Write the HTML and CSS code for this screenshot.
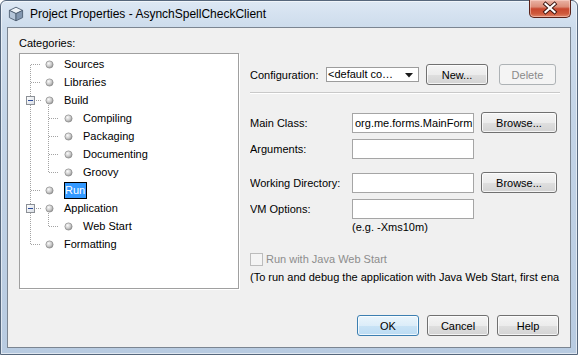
FILE: index.html
```html
<!DOCTYPE html>
<html>
<head>
<meta charset="utf-8">
<title>Project Properties</title>
<link rel="stylesheet" href="styles.css">
</head>
<body>
<svg class="defs" width="0" height="0" aria-hidden="true">
  <defs>
    <radialGradient id="ball" cx="38%" cy="35%" r="70%">
      <stop offset="0" stop-color="#fbfbfb"/>
      <stop offset="0.55" stop-color="#cdcdcd"/>
      <stop offset="1" stop-color="#8f8f8f"/>
    </radialGradient>
    <linearGradient id="boxfill" x1="0" y1="0" x2="1" y2="1">
      <stop offset="0" stop-color="#ffffff"/>
      <stop offset="1" stop-color="#d8dde4"/>
    </linearGradient>
  </defs>
</svg>
<div class="window">
  <div class="titlebar">
    <svg class="appicon" viewBox="0 0 16 16" width="16" height="16">
      <path d="M8 1.2 L14.6 4.4 L8 7.6 L1.4 4.4 Z" fill="#eef3f8" stroke="#4d5d72" stroke-width="0.9" stroke-linejoin="round"/>
      <path d="M1.4 4.4 L8 7.6 L8 14.8 L1.4 11.6 Z" fill="#b4c5d9" stroke="#4d5d72" stroke-width="0.9" stroke-linejoin="round"/>
      <path d="M8 7.6 L14.6 4.4 L14.6 11.6 L8 14.8 Z" fill="#8397b0" stroke="#4d5d72" stroke-width="0.9" stroke-linejoin="round"/>
    </svg>
    <span class="title">Project Properties - AsynchSpellCheckClient</span>
    <div class="close">
      <svg viewBox="0 0 42 18" width="42" height="18">
        <path d="M16.5 5 L25.5 13 M25.5 5 L16.5 13" stroke="#3b1510" stroke-width="4" stroke-linecap="square"/>
        <path d="M16.5 5 L25.5 13 M25.5 5 L16.5 13" stroke="#ffffff" stroke-width="2.2" stroke-linecap="square"/>
      </svg>
    </div>
  </div>
  <div class="client">
    <div class="main">
      <div class="left">
        <div class="cat-label">Categories:</div>
        <div class="tree">
          <div class="row">
            <svg width="44" height="18"><path class="dl" d="M10.5 10V18 M11 9.5H21"/><circle cx="29.5" cy="9.5" r="3.6" fill="url(#ball)" stroke="#8a8a8a" stroke-width="0.7"/></svg>
            <span class="lbl">Sources</span>
          </div>
          <div class="row">
            <svg width="44" height="18"><path class="dl" d="M10.5 0V18 M11 9.5H21"/><circle cx="29.5" cy="9.5" r="3.6" fill="url(#ball)" stroke="#8a8a8a" stroke-width="0.7"/></svg>
            <span class="lbl">Libraries</span>
          </div>
          <div class="row">
            <svg width="44" height="18"><path class="dl" d="M10.5 0V5 M10.5 14V18 M16 9.5H21 M28.5 14V18"/><rect x="6.5" y="5.5" width="8" height="8" fill="url(#boxfill)" stroke="#8c9096"/><rect x="8" y="9" width="5" height="1" fill="#2b4a9a"/><circle cx="29.5" cy="9.5" r="3.6" fill="url(#ball)" stroke="#8a8a8a" stroke-width="0.7"/></svg>
            <span class="lbl">Build</span>
          </div>
          <div class="row">
            <svg width="63" height="18"><path class="dl" d="M10.5 0V18 M28.5 0V18 M29 9.5H39"/><circle cx="48.5" cy="9.5" r="3.6" fill="url(#ball)" stroke="#8a8a8a" stroke-width="0.7"/></svg>
            <span class="lbl">Compiling</span>
          </div>
          <div class="row">
            <svg width="63" height="18"><path class="dl" d="M10.5 0V18 M28.5 0V18 M29 9.5H39"/><circle cx="48.5" cy="9.5" r="3.6" fill="url(#ball)" stroke="#8a8a8a" stroke-width="0.7"/></svg>
            <span class="lbl">Packaging</span>
          </div>
          <div class="row">
            <svg width="63" height="18"><path class="dl" d="M10.5 0V18 M28.5 0V18 M29 9.5H39"/><circle cx="48.5" cy="9.5" r="3.6" fill="url(#ball)" stroke="#8a8a8a" stroke-width="0.7"/></svg>
            <span class="lbl">Documenting</span>
          </div>
          <div class="row">
            <svg width="63" height="18"><path class="dl" d="M10.5 0V18 M28.5 0V10 M29 9.5H39"/><circle cx="48.5" cy="9.5" r="3.6" fill="url(#ball)" stroke="#8a8a8a" stroke-width="0.7"/></svg>
            <span class="lbl">Groovy</span>
          </div>
          <div class="row">
            <svg width="44" height="18"><path class="dl" d="M10.5 0V18 M11 9.5H21"/><circle cx="29.5" cy="9.5" r="3.6" fill="url(#ball)" stroke="#8a8a8a" stroke-width="0.7"/></svg>
            <span class="lbl sel">Run</span>
          </div>
          <div class="row">
            <svg width="44" height="18"><path class="dl" d="M10.5 0V5 M10.5 14V18 M16 9.5H21 M28.5 14V18"/><rect x="6.5" y="5.5" width="8" height="8" fill="url(#boxfill)" stroke="#8c9096"/><rect x="8" y="9" width="5" height="1" fill="#2b4a9a"/><circle cx="29.5" cy="9.5" r="3.6" fill="url(#ball)" stroke="#8a8a8a" stroke-width="0.7"/></svg>
            <span class="lbl">Application</span>
          </div>
          <div class="row">
            <svg width="63" height="18"><path class="dl" d="M10.5 0V18 M28.5 0V10 M29 9.5H39"/><circle cx="48.5" cy="9.5" r="3.6" fill="url(#ball)" stroke="#8a8a8a" stroke-width="0.7"/></svg>
            <span class="lbl">Web Start</span>
          </div>
          <div class="row">
            <svg width="44" height="18"><path class="dl" d="M10.5 0V10 M11 9.5H21"/><circle cx="29.5" cy="9.5" r="3.6" fill="url(#ball)" stroke="#8a8a8a" stroke-width="0.7"/></svg>
            <span class="lbl">Formatting</span>
          </div>
        </div>
      </div>
      <div class="right">
        <div class="cfg">
          <span class="cfg-label">Configuration:</span>
          <div class="combo">
            <span class="combo-text">&lt;default co…</span>
            <svg class="arrow" width="8" height="5" viewBox="0 0 8 5"><path d="M0 0H8L4 4.5Z" fill="#1a1a1a"/></svg>
          </div>
          <div class="btn new">New...</div>
          <div class="btn disabled del">Delete</div>
        </div>
        <div class="sep"></div>
        <div class="frow r-main">
          <span class="flabel">Main Class:</span>
          <div class="field">org.me.forms.MainForm</div>
          <div class="btn browse">Browse...</div>
        </div>
        <div class="frow r-args">
          <span class="flabel">Arguments:</span>
          <div class="field"></div>
        </div>
        <div class="frow r-wd">
          <span class="flabel">Working Directory:</span>
          <div class="field"></div>
          <div class="btn browse">Browse...</div>
        </div>
        <div class="frow r-vm">
          <span class="flabel">VM Options:</span>
          <div class="field"></div>
        </div>
        <div class="hint">(e.g. -Xms10m)</div>
        <div class="check-row">
          <span class="checkbox"></span>
          <span>Run with Java Web Start</span>
        </div>
        <div class="info">(To run and debug the application with Java Web Start, first ena</div>
      </div>
    </div>
    <div class="footer">
      <div class="btn default">OK</div>
      <div class="btn">Cancel</div>
      <div class="btn">Help</div>
    </div>
  </div>
</div>
</body>
</html>
```

FILE: styles.css
```css
* { box-sizing: border-box; }
html, body { margin: 0; padding: 0; }
body {
  width: 578px;
  height: 355px;
  overflow: hidden;
  background: #ffffff;
  font-family: "Liberation Sans", Arial, sans-serif;
  font-size: 11px;
  color: #000;
}
.defs { position: absolute; width: 0; height: 0; }

.window {
  width: 578px;
  height: 355px;
  border: 1px solid #56677c;
  border-radius: 6px 6px 0 0;
  background: linear-gradient(180deg, #dde8f4 0px, #cddcec 26px, #c3d4e7 120px, #b8cbe1 100%);
  box-shadow: inset 0 0 0 1px rgba(255, 255, 255, 0.55);
  display: flex;
  flex-direction: column;
}

.titlebar {
  height: 26px;
  display: flex;
  align-items: center;
  padding-left: 7px;
  flex: none;
}
.appicon { flex: none; display: block; }
.title {
  margin-left: 6px;
  font-size: 12px;
  color: #000;
  white-space: nowrap;
}
.close {
  margin-left: auto;
  align-self: flex-start;
  margin-top: -1px;
  margin-right: 6px;
  width: 42px;
  height: 18px;
  border: 1px solid #5a2219;
  border-top: none;
  border-radius: 0 0 5px 5px;
  background: linear-gradient(180deg, #eab4a6 0%, #dc8d78 40%, #c8472e 52%, #cf5a3c 80%, #e0866a 100%);
  box-shadow: inset 0 0 0 1px rgba(255, 220, 210, 0.5);
  overflow: hidden;
}
.close svg { display: block; margin: -1px 0 0 -1px; }

.client {
  margin: 0 6px;
  height: 321px;
  border: 1px solid #7b8591;
  background: #f0f0f0;
  display: flex;
  flex-direction: column;
  flex: none;
}

.main {
  display: flex;
  padding: 8px 0 0 11px;
}
.left { width: 220px; flex: none; }
.cat-label { height: 14px; line-height: 14px; margin-bottom: 3px; }
.tree {
  height: 236px;
  padding-top: 1px;
  border: 1px solid #a0a0a0;
  background: #fff;
  box-shadow: 1px 1px 0 #ffffff;
}
.row {
  display: flex;
  align-items: center;
  height: 18px;
  white-space: nowrap;
}
.row svg { display: block; flex: none; }
.dl {
  fill: none;
  stroke: #a3a3a3;
  stroke-width: 1;
  stroke-dasharray: 1 1;
  shape-rendering: crispEdges;
}
.lbl { line-height: 16px; }
.lbl.sel {
  background: #3399ff;
  color: #fff;
  border: 1px solid #000;
  line-height: 15px;
  padding: 0 1px 0 0;
}

.right {
  margin-left: 11px;
  width: 310px;
  padding-top: 28px;
  overflow: hidden;
  flex: none;
}
.cfg {
  display: flex;
  align-items: center;
  height: 21px;
}
.cfg-label { width: 76px; flex: none; }
.combo {
  width: 93px;
  height: 15px;
  border: 1px solid #9c9c9c;
  background: #fff;
  display: flex;
  align-items: center;
  padding-left: 1px;
  flex: none;
}
.combo-text {
  flex: 1;
  white-space: nowrap;
  overflow: hidden;
  line-height: 13px;
}
.combo .arrow { display: block; margin: 2px 5px 0 2px; flex: none; }

.btn {
  height: 21px;
  border: 1px solid #707070;
  border-radius: 3px;
  background: linear-gradient(180deg, #f4f4f4 0%, #ececec 50%, #dfdfdf 51%, #d3d3d3 100%);
  box-shadow: inset 0 0 0 1px rgba(255, 255, 255, 0.75);
  display: flex;
  align-items: center;
  justify-content: center;
  flex: none;
  white-space: nowrap;
}
.btn.new { width: 62px; margin-left: 7px; }
.btn.del { width: 57px; margin-left: 11px; }
.btn.disabled {
  border-color: #adb2b5;
  background: #f4f4f4;
  color: #8a8a8a;
  box-shadow: none;
}
.btn.default {
  border-color: #3c7fb1;
  background: linear-gradient(180deg, #eaf5fc 0%, #dcedf9 50%, #c9e3f6 51%, #bcdcf3 100%);
}

.sep {
  margin-top: 7px;
  height: 2px;
  border-top: 1px solid #c9c9c9;
  border-bottom: 1px solid #ffffff;
}

.frow {
  display: flex;
  align-items: center;
  height: 21px;
}
.r-main { margin-top: 18px; }
.r-args { margin-top: 6px; height: 20px; }
.r-wd { margin-top: 13px; }
.r-vm { margin-top: 6px; height: 20px; }
.flabel { width: 102px; flex: none; }
.field {
  width: 122px;
  height: 20px;
  border: 1px solid #a5a5a5;
  background: #fff;
  padding-left: 2px;
  line-height: 18px;
  white-space: nowrap;
  overflow: hidden;
  flex: none;
}
.btn.browse { width: 76px; margin-left: 7px; }

.hint {
  margin-top: 1px;
  padding-left: 102px;
  line-height: 14px;
}
.check-row {
  margin-top: 18px;
  height: 14px;
  display: flex;
  align-items: center;
  color: #8d8d8d;
}
.checkbox {
  width: 13px;
  height: 13px;
  border: 1px solid #bcbcbc;
  background: #f4f4f4;
  margin-right: 3px;
  flex: none;
}
.info {
  margin-top: 4px;
  line-height: 14px;
  white-space: nowrap;
}

.footer {
  margin-top: auto;
  display: flex;
  justify-content: flex-end;
  padding: 0 11px 11px 0;
}
.footer .btn { width: 62px; margin-left: 8px; }
```
